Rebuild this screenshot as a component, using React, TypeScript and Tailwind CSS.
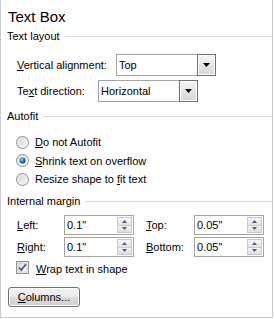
import type { ReactNode } from 'react';

function SectionHeader({ title }: { title: string }) {
  return (
    <div className="flex items-center h-[14px] leading-[14px] pl-[6px]">
      <span>{title}</span>
      <div className="flex-1 h-px bg-[#d3dbe2] ml-[5px]" />
    </div>
  );
}

function DropArrow() {
  return (
    <svg width="7" height="4" viewBox="0 0 7 4">
      <path d="M0 0 H7 L3.5 4 Z" fill="#000" />
    </svg>
  );
}

function Select({ value }: { value: string }) {
  return (
    <div className="flex w-[100px] h-[22px] border border-[#a3a3a3] bg-white">
      <div className="flex-1 flex items-center pl-[2px]">{value}</div>
      <div className="w-[19px] -my-px -mr-px border border-[#6f6f6f] bg-gradient-to-b from-[#f6f6f6] to-[#d5d5d5] shadow-[inset_0_0_0_1px_#ffffff] flex items-center justify-center">
        <DropArrow />
      </div>
    </div>
  );
}

function SpinArrow({ up }: { up?: boolean }) {
  return (
    <svg width="5" height="3" viewBox="0 0 5 3">
      <path d={up ? 'M0 3 H5 L2.5 0 Z' : 'M0 0 H5 L2.5 3 Z'} fill="#4a5d7f" />
    </svg>
  );
}

function Spinner({ value }: { value: string }) {
  return (
    <div className="flex w-[70px] h-[20px] border border-[#a3a3a3] bg-white">
      <div className="flex-1 flex items-center pl-[2px]">{value}</div>
      <div className="w-[15px] my-px mr-px flex flex-col">
        <div className="flex-1 border border-[#c7c9cc] bg-gradient-to-b from-[#f7f7f7] to-[#e3e3e3] flex items-center justify-center">
          <SpinArrow up />
        </div>
        <div className="flex-1 border border-t-0 border-[#c7c9cc] bg-gradient-to-b from-[#f3f3f3] to-[#dedede] flex items-center justify-center">
          <SpinArrow />
        </div>
      </div>
    </div>
  );
}

function Radio({ checked, children }: { checked?: boolean; children: ReactNode }) {
  return (
    <div className="flex items-center h-[18.5px] pl-[15px]">
      <svg width="13" height="13" viewBox="0 0 13 13">
        <defs>
          <linearGradient id="rbg" x1="0" y1="0" x2="1" y2="1">
            <stop offset="0" stopColor="#d2d2d2" />
            <stop offset="1" stopColor="#fafafa" />
          </linearGradient>
          <radialGradient id="rdot" cx="0.4" cy="0.35" r="0.65">
            <stop offset="0" stopColor="#9edbf8" />
            <stop offset="0.5" stopColor="#2a86cc" />
            <stop offset="1" stopColor="#0d3f7a" />
          </radialGradient>
        </defs>
        <circle cx="6.5" cy="6.5" r="6" fill="url(#rbg)" stroke="#8e8f8f" />
        <circle cx="6.5" cy="6.5" r="4.5" fill="none" stroke="#f4f4f4" strokeWidth="0.8" />
        {checked && <circle cx="6.5" cy="6.5" r="3" fill="url(#rdot)" />}
      </svg>
      <span className="ml-[6px] leading-[14px]">{children}</span>
    </div>
  );
}

function U({ children }: { children: ReactNode }) {
  return <span className="underline underline-offset-[1px]">{children}</span>;
}

export default function App() {
  return (
    <div className="w-[273px] h-[318px] bg-white border-x border-b border-[#c6ccd2] flex flex-col text-[11px] text-black font-['Liberation_Sans',Arial,sans-serif]">
      <div className="mt-[8px] pl-[7px] text-[15px] leading-[18px]">Text Box</div>

      <div className="mt-[3px]">
        <SectionHeader title="Text layout" />
      </div>

      <div className="mt-[11px] flex items-center h-[22px] pl-[16px]">
        <span className="w-[99px] leading-[14px]">
          <U>V</U>ertical alignment:
        </span>
        <Select value="Top" />
      </div>
      <div className="mt-[4px] flex items-center h-[22px] pl-[16px]">
        <span className="w-[81px] leading-[14px]">
          Te<U>x</U>t direction:
        </span>
        <Select value="Horizontal" />
      </div>

      <div className="mt-[7px]">
        <SectionHeader title="Autofit" />
      </div>

      <div className="mt-[10px] flex flex-col">
        <Radio>
          <U>D</U>o not Autofit
        </Radio>
        <Radio checked>
          <U>S</U>hrink text on overflow
        </Radio>
        <Radio>
          Resize shape to <U>f</U>it text
        </Radio>
      </div>

      <div className="mt-[5.5px]">
        <SectionHeader title="Internal margin" />
      </div>

      <div className="mt-[7px] grid grid-cols-[129px_1fr] gap-y-[2px] pl-[16px]">
        <div className="flex items-center h-[20px]">
          <span className="w-[47px] leading-[14px]">
            <U>L</U>eft:
          </span>
          <Spinner value={'0.1"'} />
        </div>
        <div className="flex items-center h-[20px]">
          <span className="w-[48px] leading-[14px]">
            <U>T</U>op:
          </span>
          <Spinner value={'0.05"'} />
        </div>
        <div className="flex items-center h-[20px]">
          <span className="w-[47px] leading-[14px]">
            <U>R</U>ight:
          </span>
          <Spinner value={'0.1"'} />
        </div>
        <div className="flex items-center h-[20px]">
          <span className="w-[48px] leading-[14px]">
            <U>B</U>ottom:
          </span>
          <Spinner value={'0.05"'} />
        </div>
      </div>

      <div className="mt-[4px] flex items-center h-[13px] pl-[15px]">
        <svg width="13" height="13" viewBox="0 0 13 13">
          <defs>
            <linearGradient id="cbg" x1="0" y1="0" x2="1" y2="1">
              <stop offset="0" stopColor="#d6d6d6" />
              <stop offset="1" stopColor="#fbfbfb" />
            </linearGradient>
          </defs>
          <rect x="0.5" y="0.5" width="12" height="12" fill="#f4f4f4" stroke="#8e8f8f" />
          <rect x="2" y="2" width="9" height="9" fill="url(#cbg)" stroke="#c0c0c0" strokeWidth="0.6" />
          <path d="M3 6.5 L5.3 9 L10 3.2" fill="none" stroke="#3f5698" strokeWidth="1.7" />
        </svg>
        <span className="ml-[7px] leading-[14px] relative top-[1px]">
          <U>W</U>rap text in shape
        </span>
      </div>

      <button className="mt-[13px] ml-[7px] w-[72px] h-[20px] rounded-[3px] border border-[#707070] bg-[linear-gradient(to_bottom,#f2f2f2_0%,#ebebeb_50%,#dddddd_50%,#cfcfcf_100%)] shadow-[inset_0_0_0_1px_#fcfcfc] flex items-center justify-center leading-[14px]">
        <span>
          <U>C</U>olumns...
        </span>
      </button>
    </div>
  );
}
